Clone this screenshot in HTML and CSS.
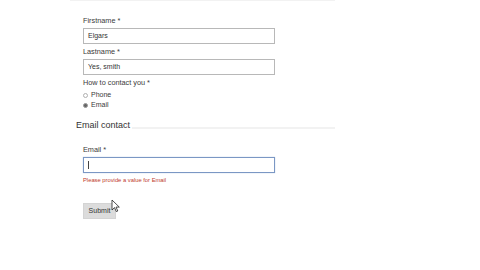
FILE: index.html
```html
<!DOCTYPE html>
<html>
<head>
<meta charset="utf-8">
<link rel="stylesheet" href="styles.css">
</head>
<body>
<div class="form">
  <div class="top-rule"></div>
  <div class="section">
    <div class="label">Firstname *</div>
    <div class="input">Elgars</div>
    <div class="label">Lastname *</div>
    <div class="input">Yes, smith</div>
    <div class="label">How to contact you *</div>
    <div class="radio-row"><span class="radio"></span>Phone</div>
    <div class="radio-row"><span class="radio checked"></span>Email</div>
  </div>
  <div class="legend"><span class="legend-text">Email contact</span><span class="legend-line"></span></div>
  <div class="section section2">
    <div class="label">Email *</div>
    <div class="input focus"><span class="caret"></span></div>
    <div class="error">Please provide a value for Email</div>
    <div class="button">Submit</div>
  </div>
</div>
<svg class="cursor" width="9" height="14" viewBox="0 0 9 14"><path d="M1 1 L1 11 L3.5 8.6 L5.3 12.6 L6.8 12 L5 8.1 L8.3 8.1 Z" fill="#fff" stroke="#222" stroke-width="0.8" stroke-linejoin="round"/></svg>
</body>
</html>
```
FILE: styles.css
```css
html, body { margin: 0; padding: 0; background: #fff; }
body { width: 480px; height: 270px; overflow: hidden; position: relative; font-family: "Liberation Sans", Arial, sans-serif; color: #333; }
.form { margin-left: 70px; width: 265px; }
.top-rule { height: 1px; background: #f2f2f2; }
.section { padding-left: 13px; padding-top: 15px; }
.label { font-size: 7.3px; line-height: 9px; height: 9px; color: #3a3a3a; }
.input { box-sizing: border-box; width: 192px; height: 16px; margin: 3px 0 3px; border: 1px solid #b8b8b8; font-size: 7px; line-height: 14px; padding-left: 4px; color: #333; display: flex; align-items: center; }
.input.focus { border: 1px solid #7b97c4; box-shadow: 0 0 1px #aac0e0; }
.caret { width: 1px; height: 8px; background: #444; }
.radio-row { display: flex; align-items: center; font-size: 7px; height: 10px; line-height: 10px; margin-top: 3px; color: #3a3a3a; }
.radio-row + .radio-row { margin-top: 0; }
.radio { box-sizing: border-box; width: 5px; height: 5px; border-radius: 50%; border: 1px solid #b0b0b0; margin-right: 3px; }
.radio.checked { background: #666; border-color: #999; }
.legend { display: flex; align-items: center; margin-top: 10px; margin-left: 6px; height: 10px; }
.legend-text { font-size: 9px; line-height: 10px; color: #333; margin-right: 2px; }
.legend-line { flex: 1; height: 2px; background: #f2f2f2; margin-top: 6px; }
.section2 { padding-top: 15px; }
.error { font-size: 5.8px; line-height: 8px; color: #c0392b; margin-top: 1px; }
.button { margin-top: 19px; width: 33px; height: 16px; background: #dcdcdc; border: 1px solid #d4d4d4; box-sizing: border-box; font-size: 7px; line-height: 14px; text-align: center; color: #333; }
.cursor { position: absolute; left: 111px; top: 199px; }
```
